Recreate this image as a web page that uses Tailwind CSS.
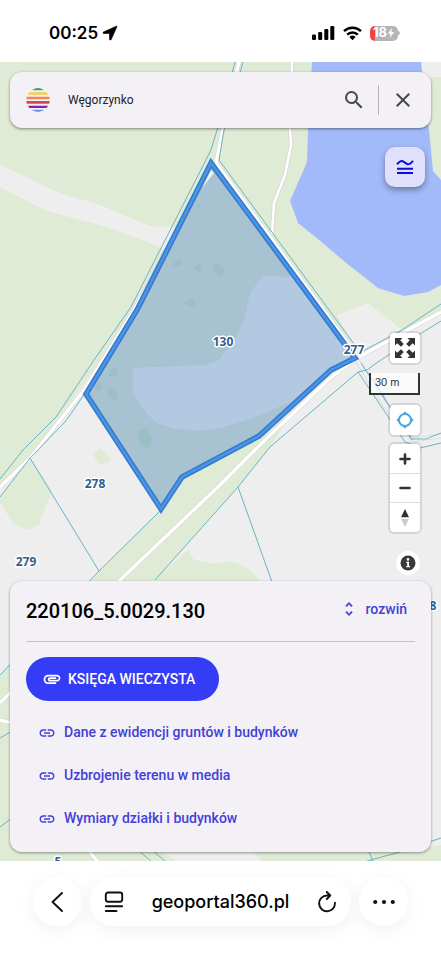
<!DOCTYPE html>
<html lang="pl">
<head>
<meta charset="utf-8">
<meta name="viewport" content="width=device-width, initial-scale=1">
<title>geoportal360.pl</title>
<script src="https://cdn.jsdelivr.net/npm/@tailwindcss/browser@4"></script>
</head>
<body class="flex min-h-screen flex-col bg-white font-['Roboto',sans-serif] text-black">

<!-- Status bar -->
<header class="flex h-[62px] items-center justify-between pt-1 pr-[41px] pl-[49px] font-['Inter',sans-serif]">
  <div class="flex items-center gap-1">
    <time class="text-[17px] leading-6 font-semibold">00:25</time>
    <svg class="size-4" viewBox="0 0 16 16" aria-label="Lokalizacja"><path d="M14.300 1.200 1.500 6.900c-.9.4-.6 1.600.3 1.600h5.400c.2 0 .3.1.3.3v5.400c0 1 1.300 1.200 1.700.3l5.600-12.500c.3-.6-.1-1.100-.5-.8z" fill="#000" stroke="#000" stroke-width=".6"/></svg>
  </div>
  <div class="flex items-center gap-2">
    <svg class="h-4 w-[23px]" viewBox="0 0 23 16" aria-label="Zasięg"><rect x="0" y="9.500" width="4" height="5.500" rx="1.200"/><rect x="6.200" y="7" width="4" height="8" rx="1.200"/><rect x="12.300" y="4" width="4" height="11" rx="1.200"/><rect x="18.300" y="1" width="4" height="14" rx="1.200"/></svg>
    <svg class="h-4 w-[19px]" viewBox="0 0 19 16" aria-label="Wi-Fi"><g fill="none" stroke="#000" stroke-width="2.500"><path d="M1 6.200a12.200 12.200 0 0 1 17 0"/><path d="M4.200 9.600a7.600 7.600 0 0 1 10.600 0"/></g><path d="M9.500 15.200 6.400 12a4.500 4.500 0 0 1 6.200 0z"/></svg>
    <div class="flex items-center">
      <div class="flex h-[15px] w-7 items-center justify-center rounded-[5px] bg-linear-to-r from-[#ee4444] from-18% to-[#b5b5b5] to-18% text-[13px] font-bold text-white">18<svg class="h-3 w-2" viewBox="0 0 8 12"><path d="M5 1 .8 6.800h2.700L2.800 11l4.400-6H4.400z" fill="#fff"/></svg></div>
      <div class="h-1 w-[2px] rounded-r bg-[#b5b5b5]"></div>
    </div>
  </div>
</header>

<main class="relative flex flex-1 flex-col overflow-hidden bg-[#eeeeee] px-[10px] pt-[10px] pb-[9px]">
  <!-- Map -->
  <svg class="absolute inset-0 size-full" viewBox="0 62 441 799" preserveAspectRatio="xMidYMid slice" role="img" aria-label="Mapa działek">
    <rect y="62" width="441" height="799" fill="#eeeeee"/>
    <g fill="#dfebd5">
      <path d="M0 62H422V77H441V311L402 330 368 303 337 315 357 352 215 164 107 352 30 457 0 487z"/>
      <path d="M0 497 30 458 52 490 39 524 27 530 14 524 0 503z"/>
      <path d="M99 448 103 451 111 460 101 465 96 460 93 454z"/>
      <path d="M161 510 182 477 259 436 293 395 300 400 270 447 238 487 155 580 0 740V675L91 580z"/>
      <path d="M188 550 194 560 215 564 228 561 240 564 252 572 263 583H150z"/>
      <path d="M0 675H14V852H163L176 861H0z"/>
      <path d="M253 852 262 861H441V845L400 852z"/>
    </g>
    <path d="M0 165 60 193 100 205 150 226 175 227 165 250 157 246 110 228 47 211 0 187z" fill="#eeeeee"/>
    <path d="M422 62H441V77H424z" fill="#eeeeee"/>
    <path d="M312 62 308 130 307 162 290 201 298 223 318 239 345 262 378 288 404 296 428 292 441 285V180L433 171 429 130 421 62z" fill="#a3bafa"/>

    <g fill="none" stroke-linejoin="round">
      <g stroke="#d9d9d5" stroke-width="4.500">
        <path d="M239 62 222 133 216 163 357 356"/>
        <path d="M216 163 134 310 84 390 30 458 0 487"/>
        <path d="M441 312 357 358 328 380 300 407 270 435 220 485 120 580 0 703"/>
        <path d="M357 360 385 405 413 440 441 436"/>
        <path d="M292 62 290 130 291 145 285 175 274 203 272 234"/>
        <path d="M0 720 12 723"/>
        <path d="M89 851 98 862"/>
      </g>
      <g stroke="#ffffff" stroke-width="3.200">
        <path d="M239 62 222 133 216 163 357 356"/>
        <path d="M216 163 134 310 84 390 30 458 0 487"/>
        <path d="M441 312 357 358 328 380 300 407 270 435 220 485 120 580 0 703"/>
        <path d="M292 62 290 130 291 145 285 175 274 203 272 234" stroke-width="2.500"/>
        <path d="M0 720 12 723"/>
        <path d="M89 851 98 862"/>
      </g>
      <path stroke="#eef2f2" stroke-width="3.200" d="M357 360 385 405 413 440 441 436"/>
    </g>

    <g fill="none" stroke="#69b4c6" stroke-width="1">
      <path d="M235 62 217 130 211 150 131 307 94 360 56 417 23 450 0 479"/>
      <path d="M243 62 224 130 219 160 357 348"/>
      <path d="M84 395 65 422 30 458 0 497"/>
      <path d="M30 458 99 571M161 510 99 571 0 675"/>
      <path d="M441 304 402 330 363 351"/>
      <path d="M441 321 420 334 378 362 367 370 358 372 270 447 238 487 155 580"/>
      <path d="M238 487 272 582"/>
      <path d="M358 372 385 412 405 442M361 363 392 410 412 439 426 439 441 433M372 377 388 404 412 440"/>
      <path d="M405 442 420 448 441 443"/>
      <path d="M0 738 12 731M0 827 12 818M139 851 152 862M153 851 166 862M369 852 373 861M367 861 400 852 441 838"/>
    </g>

    <!-- Selected plot -->
    <path d="M211 163 355 358 331 370 259 436 182 477 161 509 86 394 137 310z" fill="#a7c3d2"/>
    <path d="M263 276 292 277 355 358 331 370 290 402 253 418 220 428 200 431 173 428 157 423 147 414 133 393 133 368 205 365 218 361 235 340 245 318 250 293z" fill="#b3c9e2"/>
    <path d="M211 170 202 188 214 173z" fill="#eef1f0"/>
    <g fill="#9cbfc6">
      <path d="M174 262 180 260 183 264 178 267 173 266zM194 267 199 264 203 268 201 273 196 271zM213 265 220 263 225 269 222 277 215 272zM185 302 191 298 196 302 193 307 187 306z"/>
      <path d="M110 370 116 367 119 374 114 377 109 376zM107 390 112 387 117 392 116 400 109 398zM94 386 100 382 103 389 98 392zM139 430 147 428 152 438 149 448 141 446 137 437zM196 203 202 206 198 208z"/>
    </g>
    <path d="M211 163 355 358 331 370 259 436 182 477 161 509 86 394 137 310z" fill="none" stroke="#3379cf" stroke-width="5.500"/>
    <path d="M211 163 355 358 331 370 259 436 182 477 161 509 86 394 137 310z" fill="none" stroke="#4b95e3" stroke-width="2.500"/>

    <g class="font-['Open_Sans',sans-serif] text-[12px] font-bold" fill="#34608f" stroke="#ffffff" stroke-width="3" stroke-linejoin="round" paint-order="stroke" text-anchor="middle">
      <text x="223" y="346">130</text>
      <text x="354" y="354">277</text>
      <text x="95" y="488">278</text>
      <text x="26" y="566">279</text>
      <text x="433" y="610">8</text>
      <text x="58" y="866">5</text>
    </g>
  </svg>

  <!-- Search -->
  <form class="relative flex h-14 items-center rounded-xl bg-[#f3f0f6] pr-3 pl-4 shadow-[0_1px_3px_rgba(0,0,0,0.45)]">
    <svg class="size-6 shrink-0" viewBox="0 0 24 24" aria-hidden="true">
      <path d="M6 2.200Q12-2 18 2.200z" fill="#4a9c62"/>
      <path d="M3.300 4H20.700L22.500 7H1.500z" fill="#f0d274"/>
      <path d="M.8 8.800H23.200L23.700 11.300H.3z" fill="#ea8a4c"/>
      <path d="M.2 13H23.800L23.100 15.800H.9z" fill="#d8484a"/>
      <path d="M1.900 17.800H22.100L20.500 20H3.500z" fill="#8a1fae"/>
      <path d="M5.500 21.800H18.500Q12 26 5.500 21.800z" fill="#6a92e6"/>
    </svg>
    <input class="ml-4 min-w-0 flex-1 bg-transparent px-[2px] text-[12px] text-[#222] outline-none" type="text" value="Węgorzynko" aria-label="Szukaj miejsca">
    <button class="flex size-8 items-center justify-center" type="submit" aria-label="Szukaj"><svg class="size-6" viewBox="0 0 24 24" fill="#47464a"><path d="M15.500 14h-.79l-.28-.27A6.471 6.471 0 0 0 16 9.500 6.500 6.500 0 1 0 9.500 16c1.610 0 3.090-.59 4.230-1.570l.27.28v.79l5 4.990L20.490 19l-4.990-5zm-6 0C7.010 14 5 11.990 5 9.500S7.010 5 9.500 5 14 7.010 14 9.500 11.990 14 9.500 14z"/></svg></button>
    <span class="mx-2 h-[30px] w-px bg-[#b4b2b8]"></span>
    <button class="flex size-8 items-center justify-center" type="button" aria-label="Wyczyść"><svg class="size-6" viewBox="0 0 24 24" fill="#47464a"><path d="M19 6.410 17.590 5 12 10.590 6.410 5 5 6.410 10.590 12 5 17.590 6.410 19 12 13.410 17.590 19 19 17.590 13.410 12z"/></svg></button>
  </form>

  <button class="relative mt-[19px] mr-[6px] flex size-10 items-center justify-center self-end rounded-[10px] bg-[#e1e0fc] shadow-[0_3px_6px_rgba(0,0,0,0.35)]" type="button" aria-label="Warstwy">
    <svg class="size-5" viewBox="0 0 20 20" fill="none" stroke="#0b10d8" stroke-width="2"><path d="M2 7.300 C4 5 6 3.200 7.500 4.200L12.300 7.200C14 8 16 6 18 3.800M2 11.800H18M2 16H18"/></svg>
  </button>

  <!-- Map controls -->
  <div class="relative mt-auto mr-[11px] flex flex-col items-end">
    <button class="flex size-[30px] items-center justify-center rounded bg-white shadow-[0_0_0_2px_rgba(0,0,0,0.1)]" type="button" aria-label="Pełny ekran"><svg class="size-5" viewBox="0 0 20 20" fill="#333"><path d="M0 0H7.500L5.200 2.300 8.800 5.900 5.900 8.800 2.300 5.200 0 7.500z"/><path d="M20 0H12.500L14.800 2.300 11.200 5.900 14.100 8.800 17.700 5.200 20 7.500z"/><path d="M0 20H7.500L5.200 17.700 8.800 14.100 5.900 11.200 2.300 14.800 0 12.500z"/><path d="M20 20H12.500L14.800 17.700 11.200 14.100 14.100 11.200 17.700 14.800 20 12.500z"/></svg></button>
    <div class="mt-[10px] h-[22px] w-[51px] border-2 border-t-0 border-[#333] bg-white/75 pl-1 font-['Liberation_Sans',sans-serif] text-[11px] leading-[18px] text-[#333]">30 m</div>
    <button class="mt-[10px] flex size-[30px] items-center justify-center rounded bg-white shadow-[0_0_0_2px_rgba(0,0,0,0.1)]" type="button" aria-label="Moja lokalizacja"><svg class="size-[18px]" viewBox="0 0 18 18" fill="none" stroke="#4aa9e0"><circle cx="9" cy="9" r="6" stroke-width="2"/><path fill="#4aa9e0" stroke="none" d="M9 .3 11.400 3H6.600zM9 17.700 11.400 15H6.600zM.3 9 3 6.600V11.400zM17.700 9 15 6.600V11.400z"/></svg></button>
    <div class="mt-[9px] flex w-[30px] flex-col divide-y divide-[#dddddd] rounded bg-white shadow-[0_0_0_2px_rgba(0,0,0,0.1)]">
      <button class="flex h-[30px] items-center justify-center" type="button" aria-label="Przybliż"><svg class="size-3" viewBox="0 0 12 12" stroke="#333" stroke-width="2.600" stroke-linecap="round"><path d="M6 1.500V10.500M1.500 6H10.500"/></svg></button>
      <button class="flex h-[29px] items-center justify-center" type="button" aria-label="Oddal"><svg class="size-3" viewBox="0 0 12 12" stroke="#333" stroke-width="2.600" stroke-linecap="round"><path d="M1.500 6H10.500"/></svg></button>
      <button class="flex h-[29px] items-center justify-center" type="button" aria-label="Obróć na północ"><svg class="h-[18px] w-2" viewBox="0 0 8 18"><path d="M4 0 8 8.300H0z" fill="#333"/><path d="M4 18 8 10H0z" fill="#ccc"/></svg></button>
    </div>
    <button class="mt-[19px] flex size-6 items-center justify-center rounded-full bg-white" type="button" aria-label="Informacje"><svg class="size-4" viewBox="0 0 16 16"><circle cx="8" cy="8" r="7.500" fill="#3a3a3a"/><path d="M6.200 6.700H9V11h1v1.300H6.200V11h1V8h-1z" fill="#fff"/><circle cx="8" cy="4.400" r="1.300" fill="#fff"/></svg></button>
  </div>

  <!-- Plot card -->
  <section class="relative mt-[6px] rounded-xl bg-[#f3f0f6] px-4 pb-3 shadow-[0_1px_3px_rgba(0,0,0,0.4)]">
    <div class="flex h-[61px] items-center justify-between border-b border-[#c4c2c8]">
      <h1 class="text-[20px] leading-6 font-medium">220106_5.0029.130</h1>
      <button class="mb-1 flex items-center gap-2 pr-2 text-[14px] leading-5 font-medium text-[#4340d8]" type="button"><svg class="size-[18px]" viewBox="0 0 24 24" fill="#4340d8" stroke="#4340d8" stroke-width=".6"><path d="M12 5.830 15.170 9l1.410-1.410L12 3 7.410 7.590 8.830 9 12 5.830zm0 12.340L8.830 15l-1.410 1.410L12 21l4.590-4.590L15.170 15 12 18.170z"/></svg>rozwiń</button>
    </div>
    <a class="mt-[15px] inline-flex h-11 items-center gap-[6px] rounded-full bg-[#343df5] pr-6 pl-4 text-[14px] font-medium text-white" href="#ksiega"><svg class="size-5" viewBox="0 0 24 24" fill="#fff"><path d="M2 12.500C2 9.460 4.460 7 7.500 7H18c2.210 0 4 1.790 4 4s-1.790 4-4 4H9.500C8.120 15 7 13.880 7 12.500S8.120 10 9.500 10H17v2H9.410c-.55 0-.55 1 0 1H18c1.100 0 2-.9 2-2s-.9-2-2-2H7.500C5.570 9 4 10.570 4 12.500S5.570 16 7.500 16H17v2H7.500C4.460 18 2 15.540 2 12.500z"/></svg>KSIĘGA WIECZYSTA</a>
    <nav class="mt-[10px] flex flex-col items-start pl-3 text-[14px] font-medium text-[#4340d8]">
      <a class="flex h-[43px] items-center gap-2" href="#ewidencja"><svg class="size-[18px]" viewBox="0 0 24 24" fill="#4340d8"><path d="M3.900 12c0-1.710 1.390-3.100 3.100-3.100h4V7H7c-2.760 0-5 2.240-5 5s2.240 5 5 5h4v-1.900H7c-1.710 0-3.100-1.390-3.100-3.100zM8 13h8v-2H8v2zm9-6h-4v1.900h4c1.710 0 3.100 1.390 3.100 3.100s-1.390 3.100-3.100 3.100h-4V17h4c2.760 0 5-2.240 5-5s-2.240-5-5-5z"/></svg>Dane z ewidencji gruntów i budynków</a>
      <a class="flex h-[43px] items-center gap-2" href="#media"><svg class="size-[18px]" viewBox="0 0 24 24" fill="#4340d8"><path d="M3.900 12c0-1.710 1.390-3.100 3.100-3.100h4V7H7c-2.760 0-5 2.240-5 5s2.240 5 5 5h4v-1.900H7c-1.710 0-3.100-1.390-3.100-3.100zM8 13h8v-2H8v2zm9-6h-4v1.900h4c1.710 0 3.100 1.390 3.100 3.100s-1.390 3.100-3.100 3.100h-4V17h4c2.760 0 5-2.240 5-5s-2.240-5-5-5z"/></svg>Uzbrojenie terenu w media</a>
      <a class="flex h-[43px] items-center gap-2" href="#wymiary"><svg class="size-[18px]" viewBox="0 0 24 24" fill="#4340d8"><path d="M3.900 12c0-1.710 1.390-3.100 3.100-3.100h4V7H7c-2.760 0-5 2.240-5 5s2.240 5 5 5h4v-1.900H7c-1.710 0-3.100-1.390-3.100-3.100zM8 13h8v-2H8v2zm9-6h-4v1.900h4c1.710 0 3.100 1.390 3.100 3.100s-1.390 3.100-3.100 3.100h-4V17h4c2.760 0 5-2.240 5-5s-2.240-5-5-5z"/></svg>Wymiary działki i budynków</a>
    </nav>
  </section>
</main>

<!-- Browser bar -->
<footer class="flex gap-2 px-[33px] pt-4 pb-[34px] font-['Inter',sans-serif]">
  <button class="flex size-[49px] shrink-0 items-center justify-center rounded-full bg-white shadow-[0_4px_20px_rgba(0,0,0,0.06)]" type="button" aria-label="Wstecz"><svg class="size-6" viewBox="0 0 24 24" fill="none" stroke="#111" stroke-width="1.900" stroke-linecap="round" stroke-linejoin="round"><path d="M16 3 6.500 12 16 21"/></svg></button>
  <div class="flex h-[49px] min-w-0 flex-1 items-center justify-between rounded-full bg-white px-3 shadow-[0_4px_20px_rgba(0,0,0,0.06)]">
    <button class="flex size-6 items-center justify-center" type="button" aria-label="Menu strony"><svg class="size-[22px]" viewBox="0 0 22 22" fill="none" stroke="#111" stroke-width="1.900" stroke-linecap="round"><rect x="2.800" y="1.500" width="16.400" height="9.300" rx="2.200"/><path d="M2.800 15.300H19.200M2.800 20H13.500"/></svg></button>
    <button class="text-[18px] leading-6 font-medium" type="button">geoportal360.pl</button>
    <button class="flex size-6 items-center justify-center" type="button" aria-label="Odśwież"><svg class="size-[22px]" viewBox="0 0 22 22" fill="none" stroke="#111" stroke-width="1.900" stroke-linecap="round" stroke-linejoin="round"><path d="M18.900 11.800A7.900 7.900 0 1 1 11 4.500H14M10.800 1 14.300 4.500 10.800 8"/></svg></button>
  </div>
  <button class="flex size-[49px] shrink-0 items-center justify-center rounded-full bg-white shadow-[0_4px_20px_rgba(0,0,0,0.06)]" type="button" aria-label="Więcej"><svg class="size-6" viewBox="0 0 24 24" fill="#111"><circle cx="3.200" cy="12" r="2.100"/><circle cx="12" cy="12" r="2.100"/><circle cx="20.800" cy="12" r="2.100"/></svg></button>
</footer>
</body>
</html>
